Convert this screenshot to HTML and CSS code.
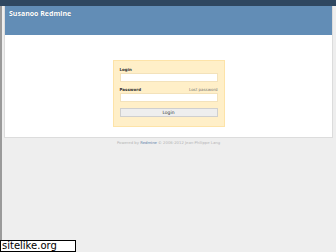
FILE: index.html
```html
<!DOCTYPE html>
<html lang="en">
<head>
  <meta charset="UTF-8">
  <title>Susanoo Redmine</title>
  <link rel="stylesheet" href="styles.css">
</head>
<body>

  <!-- top menu strip -->
  <div class="top-menu"></div>

  <div class="frame">
    <div class="wrapper">
      <div class="header">
        <h1>Susanoo Redmine</h1>
      </div>

      <div class="main">
        <div class="login-form">
          <label class="field-label">Login</label>
          <div class="input"></div>

          <div class="label-row">
            <label class="field-label">Password</label>
            <span class="lost">Lost password</span>
          </div>
          <div class="input"></div>

          <div class="button">Login</div>
        </div>
      </div>
    </div>

    <div class="footer">
      Powered by <span class="footer-link">Redmine</span> © 2006-2012 Jean-Philippe Lang
    </div>
  </div>

  <div class="badge">sitelike.org</div>

</body>
</html>
```

FILE: styles.css
```css
html, body {
  height: 100%;
}

body {
  margin: 0;
  background-color: #eeeeee;
  font-family: "DejaVu Sans", Verdana, sans-serif;
  overflow: hidden;
  position: relative;
}

.top-menu {
  height: 6px;
  background-color: #2f4760;
}

.frame {
  border-left: 2px solid #9a9a9a;
  height: 234px;
  padding: 0 3px 0 2px;
}

.wrapper {
  border-right: 1px solid #dcdcdc;
  border-left: 1px solid #dcdcdc;
  border-bottom: 1px solid #dcdcdc;
}

.header {
  height: 29px;
  background-color: #628db6;
  padding: 3px 4px 0;
  box-sizing: border-box;
}

h1 {
  margin: 0;
  font-family: "Open Sans", "DejaVu Sans", sans-serif;
  font-size: 7px;
  font-weight: bold;
  color: #ffffff;
  text-shadow: 0 0 1px rgba(40, 60, 90, 0.4);
}

.main {
  background-color: #ffffff;
  height: 102px;
  padding-top: 25px;
  box-sizing: border-box;
}

.login-form {
  width: 112px;
  height: 67px;
  box-sizing: border-box;
  margin: 0 auto;
  background-color: #ffefc8;
  border: 1px solid #fde3a8;
  padding: 6px 6px 0 6px;
  display: flex;
  flex-direction: column;
}

.field-label {
  font-size: 4px;
  font-weight: bold;
  color: #333;
  height: 6px;
}

.label-row {
  display: flex;
  justify-content: space-between;
  margin-top: 5px;
}

.lost {
  font-size: 4px;
  color: #777;
}

.input {
  height: 9px;
  background-color: #ffffff;
  border: 1px solid #f3e2bb;
  box-sizing: border-box;
}

.button {
  margin-top: 6px;
  height: 9px;
  background-color: #eeeeee;
  border: 1px solid #cfcfcf;
  box-sizing: border-box;
  font-size: 4.5px;
  color: #333;
  text-align: center;
  line-height: 7px;
}

.footer {
  padding-top: 2px;
  font-size: 3.8px;
  color: #b5b5b5;
  text-align: center;
}

.footer-link {
  color: #5a7fa8;
}

.badge {
  position: absolute;
  left: 0;
  bottom: 0;
  width: 76px;
  height: 12px;
  box-sizing: border-box;
  background-color: #ffffff;
  border: 1px solid #000;
  font-family: "DejaVu Sans", sans-serif;
  font-size: 10px;
  line-height: 10px;
  color: #000;
  padding-left: 1px;
}
```
